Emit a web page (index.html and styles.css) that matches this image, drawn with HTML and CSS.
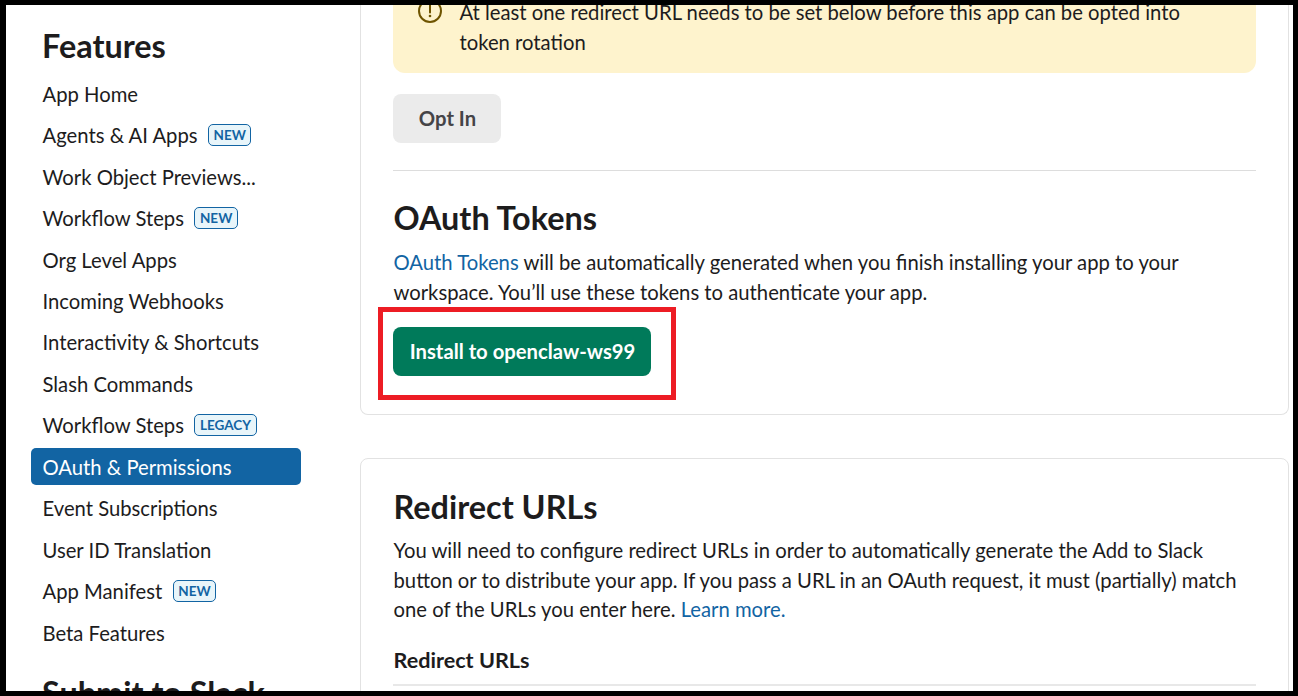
FILE: index.html
```html
<!DOCTYPE html>
<html lang="en">

<head>
  <meta charset="UTF-8">
  <title>OAuth &amp; Permissions</title>
  <link rel="stylesheet" href="styles.css">
</head>

<body>
  <div class="frame">
    <div class="sidebar">
      <h2 class="side-title">Features</h2>
      <ul class="side-nav">
        <li><a href="#">App Home</a></li>
        <li><a href="#">Agents &amp; AI Apps</a><span class="tag">NEW</span></li>
        <li><a href="#">Work Object Previews...</a></li>
        <li><a href="#">Workflow Steps</a><span class="tag">NEW</span></li>
        <li><a href="#">Org Level Apps</a></li>
        <li><a href="#">Incoming Webhooks</a></li>
        <li><a href="#">Interactivity &amp; Shortcuts</a></li>
        <li><a href="#">Slash Commands</a></li>
        <li><a href="#">Workflow Steps</a><span class="tag">LEGACY</span></li>
        <li class="active"><a href="#">OAuth &amp; Permissions</a></li>
        <li><a href="#">Event Subscriptions</a></li>
        <li><a href="#">User ID Translation</a></li>
        <li><a href="#">App Manifest</a><span class="tag">NEW</span></li>
        <li><a href="#">Beta Features</a></li>
      </ul>
      <h2 class="side-title side-title-next">Submit to Slack</h2>
    </div>

    <div class="main">
      <div class="card card-top">
        <div class="alert">
          <svg class="alert-icon" width="26" height="26" viewBox="0 0 26 26">
            <circle cx="13" cy="13" r="11" fill="none" stroke="#6f5400" stroke-width="2"/>
            <path d="M13 7v7.5" fill="none" stroke="#6f5400" stroke-width="2" stroke-linecap="round"/>
            <circle cx="13" cy="18" r="1.3" fill="#6f5400"/>
          </svg>
          <p>At least one redirect URL needs to be set below before this app can be opted into token rotation</p>
        </div>
        <button class="btn btn-grey">Opt In</button>
        <hr class="rule">
        <h2 class="card-title">OAuth Tokens</h2>
        <p class="copy copy-tokens"><a href="#">OAuth Tokens</a> will be automatically generated when you finish installing your app to your workspace. You’ll use these tokens to authenticate your app.</p>
        <div class="install-wrap">
          <button class="btn btn-green">Install to openclaw-ws99</button>
          <div class="highlight"></div>
        </div>
      </div>

      <div class="card card-next">
        <h2 class="card-title">Redirect URLs</h2>
        <p class="copy">You will need to configure redirect URLs in order to automatically generate the Add to Slack button or to distribute your app. If you pass a URL in an OAuth request, it must (partially) match one of the URLs you enter here. <a href="#">Learn more.</a></p>
        <h3 class="sub-title">Redirect URLs</h3>
        <div class="sub-rule"></div>
      </div>
    </div>
  </div>
</body>

</html>
```

FILE: styles.css
```css
html,
body {
  margin: 0;
  padding: 0;
  overflow: hidden;
}

body {
  font-family: Lato, "Open Sans", sans-serif;
  color: #1d1c1d;
}

.frame {
  box-sizing: border-box;
  width: 1298px;
  height: 696px;
  border: solid #000;
  border-width: 5px 5px 5px 6px;
  background: #fff;
  display: flex;
  overflow: hidden;
}

a {
  text-decoration: none;
}

/* sidebar */
.sidebar {
  width: 354px;
  flex-shrink: 0;
  padding: 0 0 0 25px;
  box-sizing: border-box;
}

.side-title {
  margin: 21px 0 0 11px;
  font-size: 32.4px;
  line-height: 40px;
  font-weight: 700;
}

.side-title-next {
  margin-top: 22px;
}

.side-nav {
  list-style: none;
  margin: 8.7px 0 0;
  padding: 0;
  width: 270px;
  display: flex;
  flex-direction: column;
  gap: 4.46px;
}

.side-nav li {
  box-sizing: border-box;
  height: 37px;
  padding: 1px 0 0 11.5px;
  border-radius: 5px;
  display: flex;
  align-items: center;
  font-size: 20.25px;
}

.side-nav a {
  color: #1d1c1d;
}

.side-nav .active {
  background: #1264a3;
}

.side-nav .active a {
  color: #fff;
}

.tag {
  margin-left: 10.5px;
  height: 20px;
  padding: 0 4.5px;
  border: 1px solid #1264a3;
  border-radius: 5px;
  background: #e8f5fa;
  color: #1264a3;
  font-size: 13.5px;
  font-weight: 700;
  line-height: 21px;
}

/* main column */
.main {
  flex: 1;
  min-width: 0;
  margin-right: 4px;
}

.card {
  border: 1px solid #e2e2e2;
  background: #fff;
  padding: 0 32px;
}

.card-top {
  border-top: 0;
  border-radius: 0 0 8px 8px;
  height: 410px;
  box-sizing: border-box;
}

.card-next {
  margin-top: 43px;
  border-radius: 8px 8px 0 0;
  height: 260px;
  box-sizing: border-box;
}

.alert {
  height: 68px;
  padding: 0 36px 0 24px;
  background: #fef3cd;
  border-radius: 0 0 12px 12px;
  display: flex;
  gap: 16.5px;
  box-sizing: border-box;
}

.alert-icon {
  flex-shrink: 0;
  margin-top: -7px;
}

.alert p {
  margin: -7px 0 0;
  font-size: 20.25px;
  line-height: 29.7px;
}

.btn {
  border: 0;
  border-radius: 8px;
  font-family: inherit;
  font-size: 20.25px;
  font-weight: 700;
  height: 49px;
  padding: 0 15.5px 1px 16.5px;
  display: block;
}

.btn-grey {
  margin-top: 21px;
  width: 108px;
  background: #ebebeb;
  color: #454447;
}

.btn-green {
  width: 258px;
  background: #007a5a;
  color: #fff;
  white-space: nowrap;
}

.rule {
  border: 0;
  border-top: 1px solid #dddddd;
  margin: 27px 0 0;
}

.card-title {
  margin: 27px 0 0 0.5px;
  font-size: 32.4px;
  line-height: 40px;
  font-weight: 700;
}

.copy {
  margin: 9px 0 0 0.5px;
  font-size: 20.25px;
  line-height: 29.7px;
}

.copy-tokens {
  margin-top: 10px;
}

.copy a {
  color: #1264a3;
}

.install-wrap {
  position: relative;
  margin-top: 20px;
}

.highlight {
  position: absolute;
  left: -15px;
  top: -20px;
  width: 298px;
  height: 93px;
  box-sizing: border-box;
  border: 5px solid #ed1c24;
}

.card-next .card-title {
  margin-top: 28px;
}

.sub-title {
  margin: 21px 0 0 0.5px;
  font-size: 21.6px;
  line-height: 28px;
  font-weight: 700;
}

.sub-rule {
  margin-top: 10px;
  height: 2px;
  background: #e8e8e8;
}
```
